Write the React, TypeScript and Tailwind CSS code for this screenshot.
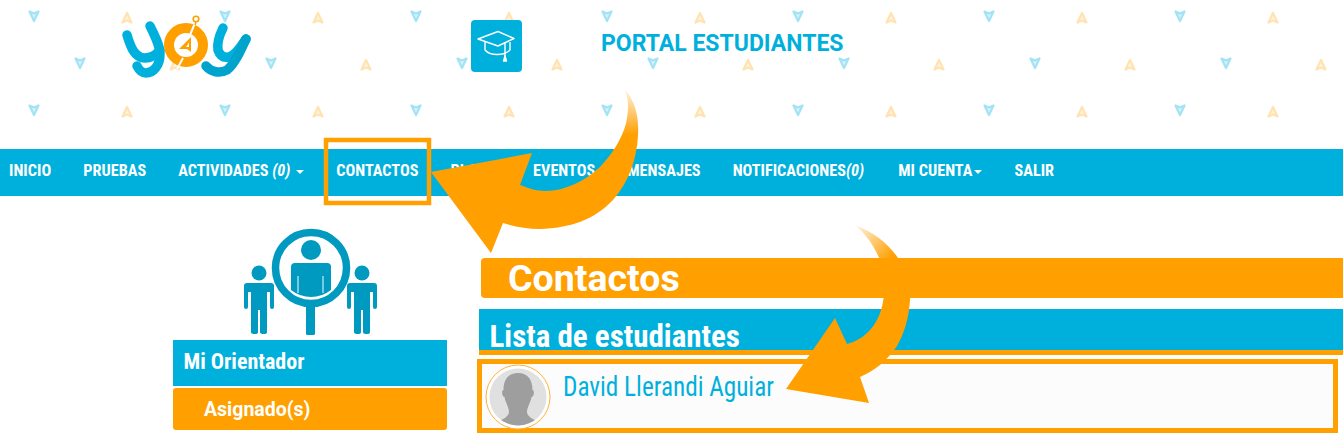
import React from "react";

const BLUE = "#00b0dc";
const ORANGE = "#ff9f00";

function Pattern() {
  const blue: [number, number][] = [];
  const orange: [number, number][] = [];
  for (let i = 0; i < 8; i++) {
    for (const y of [16, 110]) {
      blue.push([34 + i * 191, y]);
      orange.push([127 + i * 191, y + 2]);
    }
    blue.push([80 + i * 191, 63]);
    orange.push([175 + i * 191, 65]);
  }
  return (
    <svg className="absolute inset-0 w-full h-[149px]" viewBox="0 0 1343 149">
      {blue.map(([x, y], i) => (
        <path key={i} transform={`translate(${x} ${y})`} fill="#d5f3fb" stroke="#a3e3f5" strokeWidth="2.2" strokeLinejoin="round" d="M-4.5 -4.5 L0 -2.5 L4.5 -4.5 L0 5 Z" />
      ))}
      {orange.map(([x, y], i) => (
        <path key={i} transform={`translate(${x} ${y})`} fill="#fff4e0" stroke="#ffe3b2" strokeWidth="2.2" strokeLinejoin="round" d="M-4.5 4.5 L0 -5 L4.5 4.5 L0 2.5 Z" />
      ))}
    </svg>
  );
}

function Logo() {
  return (
    <svg className="absolute left-[118px] top-[10px]" width="140" height="72" viewBox="118 10 140 72" fill="none">
      <g stroke={BLUE} strokeWidth="9.5" strokeLinecap="round" strokeLinejoin="round">
        <path d="M127 35 C130 45 134 58 145 58 C151 58 156 55 160 50" />
        <path d="M150 26 C155 36 160 46 160 54 C160 66 153 73 146 73 C142 73 139 70 137 66" />
        <path d="M223 28 C219 36 217 44 218 50 C220 56 224 58 229 57 C236 55 241 46 246 39" />
      </g>
      <path d="M246 39 C240 52 234 65 227 70 C220 74 211 72 206 66" stroke="#00a3cc" strokeWidth="9.5" strokeLinecap="round" />
      <circle cx="186" cy="45" r="17" stroke={ORANGE} strokeWidth="10" />
      <path d="M195 23 L190 35 M183 58 L177 69" stroke="#fff" strokeWidth="2" />
      <path d="M196 22 L195 25" stroke={ORANGE} strokeWidth="1.5" />
      <circle cx="196" cy="19" r="2.8" fill="#fff" stroke={ORANGE} strokeWidth="1.6" />
      <path d="M191 37 L179 49 L187 49 L191 52 Z" fill={ORANGE} />
      <path d="M189 42.5 L186 47 L189 47 Z" fill="#fff" />
    </svg>
  );
}

function CapIcon() {
  return (
    <div className="absolute left-[471px] top-[20px] w-[51px] h-[52px] rounded-[4px] bg-[#00b0dc] flex items-center justify-center">
      <svg width="51" height="52" viewBox="471 20 51 52" fill="none" stroke="#fff" strokeWidth="1.4" strokeLinejoin="round">
        <path d="M478 39 L498 31.5 L514 38.5 L498 46 Z" />
        <path d="M485 42 V50 C490 56 504 56 510 50 V42" />
        <path d="M505 42 V56" />
        <path d="M505 56 L503.5 61 H506.5 Z" fill="#fff" />
      </svg>
    </div>
  );
}

function PeopleIcon() {
  const side = (x: number, k: string) => (
    <g key={k} fill="#0099bf">
      <circle cx={x + 15} cy="273" r="7.5" />
      <path d={`M${x + 3} 283 H${x + 27} Q${x + 30} 283 ${x + 30} 286 V307 Q${x + 30} 309 ${x + 28} 309 Q${x + 26} 309 ${x + 26} 307 V292 H${x + 23} V332 Q${x + 23} 334 ${x + 20} 334 Q${x + 16} 334 ${x + 16} 332 V310 H${x + 14} V332 Q${x + 14} 334 ${x + 11} 334 Q${x + 7} 334 ${x + 7} 332 V292 H${x + 4} V307 Q${x + 4} 309 ${x + 2} 309 Q${x} 309 ${x} 307 V286 Q${x} 283 ${x + 3} 283 Z`} />
    </g>
  );
  return (
    <svg width="136" height="108" viewBox="242 228 136 108" className="block">
      {side(244, "l")}
      {side(347, "r")}
      <circle cx="311" cy="268" r="35.5" fill="#fff" stroke="#0099bf" strokeWidth="7.5" />
      <rect x="306" y="305" width="9" height="30" rx="1.5" fill="#0099bf" />
      <circle cx="311" cy="250" r="10" fill="#0099bf" />
      <path d="M295 263 H327 Q331 263 331 267 V290 Q322 297 311 297 Q300 297 291 290 V267 Q291 263 295 263 Z" fill="#0099bf" />
      <path d="M298 276 V293 M323 276 V293" stroke="#fff" strokeWidth="1.2" opacity="0.8" />
    </svg>
  );
}

function Avatar() {
  return (
    <svg width="66" height="66" viewBox="485 362 66 66" className="block shrink-0">
      <defs>
        <clipPath id="disc"><circle cx="518" cy="395" r="28.5" /></clipPath>
      </defs>
      <circle cx="518" cy="395" r="32" fill="#fff" stroke="#ffb03a" strokeWidth="1" />
      <circle cx="518" cy="395" r="28.5" fill="#e0e0e0" />
      <g clipPath="url(#disc)" fill="#9e9e9e">
        <path d="M518 371 C528 371 532.5 378 532.5 388 C534.5 388 534.5 394 531.5 395 C530.5 401 527 405 527 410 C527 414 533 418 538 419 L538 428 H498 V419 C503 418 509 414 509 410 C509 405 505.5 401 504.5 395 C501.5 394 501.5 388 503.5 388 C503.5 378 508 371 518 371 Z" />
      </g>
    </svg>
  );
}

function Arrows() {
  return (
    <svg className="absolute inset-0 pointer-events-none" width="1343" height="445" viewBox="0 0 1343 445">
      <defs>
        <linearGradient id="a1" x1="0" y1="88" x2="0" y2="135" gradientUnits="userSpaceOnUse">
          <stop offset="0" stopColor={ORANGE} stopOpacity="0.1" />
          <stop offset="1" stopColor={ORANGE} />
        </linearGradient>
        <linearGradient id="a2" x1="855" y1="225" x2="892" y2="258" gradientUnits="userSpaceOnUse">
          <stop offset="0" stopColor={ORANGE} stopOpacity="0.1" />
          <stop offset="1" stopColor={ORANGE} />
        </linearGradient>
      </defs>
      <path fill="url(#a1)" d="M625 89 C636 103 639 118 638 135 C637 160 628 183 613 200 C594 220 570 228 540 229 C527 229 515 227 503 223 L491 253 L431 172 L532 153 L520 185 C528 188 536 191 546 191 C565 191 585 181 600 167 C616 150 625 132 627 118 C629 107 628 98 625 89 Z" />
      <path fill="url(#a2)" d="M855 225 C873 232 888 243 898 258 C906 272 910 286 910 300 C909 318 904 334 897 346 C887 361 874 371 860 377 L869 403 L786 389 L835 318 L847 344 C858 341 867 335 874 325 C882 314 885 296 885 280 C883 262 873 240 855 225 Z" />
      <rect x="326" y="140" width="103" height="63" fill="none" stroke={ORANGE} strokeWidth="4.5" />
    </svg>
  );
}

const navClass = "text-white text-[16.2px] tracking-[0.03px] font-bold whitespace-nowrap [font-stretch:75%]";

export default function App() {
  return (
    <div className="relative w-[1343px] h-[445px] overflow-hidden bg-white font-['Roboto',sans-serif]">
      <header className="relative h-[149px]">
        <Pattern />
        <Logo />
        <CapIcon />
        <h1 className="absolute left-[601px] top-[29px] text-[23px] leading-[30px] font-bold text-[#00b0dc] whitespace-nowrap">PORTAL ESTUDIANTES</h1>
      </header>
      <nav className="h-[47px] bg-[#00b0dc] flex items-center pl-[9px] pb-[2px] gap-8">
        <span className={navClass}>INICIO</span>
        <span className={navClass}>PRUEBAS</span>
        <span className={navClass}>ACTIVIDADES <i>(0)</i> <span className="inline-block align-middle ml-0.5 w-0 h-0 border-x-[4px] border-x-transparent border-t-[4px] border-t-white" /></span>
        <span className={navClass}>CONTACTOS</span>
        <span className={`${navClass} -mr-[3px]`}>PLANES</span>
        <span className={navClass}>EVENTOS</span>
        <span className={navClass}>MENSAJES</span>
        <span className={`${navClass} mr-[2px]`}>NOTIFICACIONES<i>(0)</i></span>
        <span className={navClass}>MI CUENTA<span className="inline-block align-middle ml-0.5 w-0 h-0 border-x-[4px] border-x-transparent border-t-[4px] border-t-white" /></span>
        <span className={navClass}>SALIR</span>
      </nav>
      <main className="flex">
        <aside className="ml-[173px] w-[274px] shrink-0 pt-[32px]">
          <div className="flex justify-center h-[112px]"><PeopleIcon /></div>
          <div className="h-[46px] bg-[#00b0dc] pl-[10.5px] pt-[8px] text-white text-[22px] leading-[28px] font-bold [font-stretch:75%]">Mi Orientador</div>
          <div className="mt-[2px] h-[42px] bg-[#ff9f00] rounded-[3px] pl-[31px] pt-[2px] flex items-center text-white text-[19.5px] font-bold">Asignado(s)</div>
        </aside>
        <section className="ml-[30px] flex-1 pt-[62px]">
          <div className="ml-[4px] h-[40px] bg-[#ff9f00] rounded-l-[4px] pl-[27px] pt-[1px] flex items-center text-white text-[37.5px] font-bold">Contactos</div>
          <div className="ml-[2px] mt-[11px] h-[46px] bg-[#00b0dc] border-b-[5px] border-[#ff9f00] pl-[10.5px] pt-[10px] text-white text-[31px] leading-[36px] font-bold [font-stretch:75%] whitespace-nowrap overflow-hidden">Lista de estudiantes</div>
          <div className="mt-[4px] mr-[5px] h-[74px] border-[5px] border-[#ff9f00] bg-[#fcfcfc] flex items-start pl-[3px]">
            <Avatar />
            <span className="inline-block origin-left scale-x-[0.9] ml-[12px] mt-[7px] text-[28px] leading-[32px] text-[#00b0dc] [font-stretch:75%] whitespace-nowrap">David Llerandi Aguiar</span>
          </div>
        </section>
      </main>
      <Arrows />
    </div>
  );
}
